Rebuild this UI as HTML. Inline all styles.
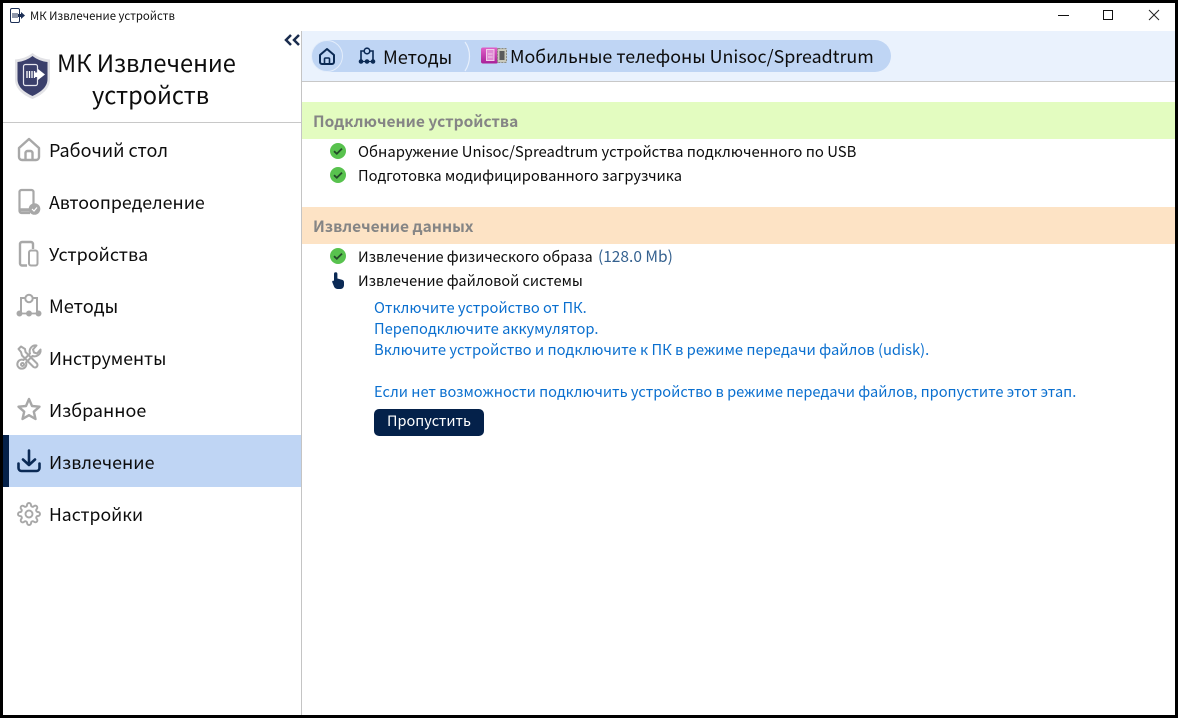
<!DOCTYPE html>
<html><head><meta charset="utf-8">
<style>
html,body{margin:0;padding:0;background:#000;}
#w{position:relative;width:1178px;height:718px;background:#000;overflow:hidden;font-family:"Noto Sans CJK JP","Liberation Sans",sans-serif;}
#a{position:absolute;left:3px;top:3px;width:1172px;height:712px;background:#fff;}
.t{position:absolute;white-space:nowrap;line-height:1;transform-origin:0 50%;}
.b{position:absolute;}
.n{font-size:18px;color:#0c0c0c;left:49px;}
.r{font-size:14.5px;color:#0c0c0c;left:358px;}
.l{font-size:14.7px;color:#0a6fcf;left:374px;}
.h{font-size:15.5px;font-weight:700;color:#858585;left:313px;}
svg{position:absolute;overflow:visible;}
</style></head><body><div id="w">
<div id="a"></div>

<!-- title bar -->
<svg style="left:10px;top:8px" width="16" height="16" viewBox="0 0 16 16" fill="none"><rect x="0.5" y="0.5" width="9" height="14" rx="1.5" stroke="#1c2f55"/><path d="M3 5v5M5 5v5M7 5v5" stroke="#1c2f55"/><path d="M8 6h3V4l4 3.5-4 3.5V9H8z" fill="#1c2f55"/></svg>
<div class="t" style="left:30px;top:11px;font-size:11.35px;color:#111">МК Извлечение устройств</div>
<svg style="left:1058px;top:15px" width="11" height="2"><rect width="11" height="1" fill="#111"/></svg>
<svg style="left:1103px;top:10px" width="10" height="10"><rect x="0.5" y="0.5" width="9" height="9" fill="none" stroke="#111"/></svg>
<svg style="left:1149px;top:10px" width="10" height="10"><path d="M0 0L10 10M10 0L0 10" stroke="#222" fill="none"/></svg>

<!-- sidebar -->
<div class="b" style="left:301px;top:31px;width:1px;height:684px;background:#c4c4c4"></div>
<div class="b" style="left:3px;top:122px;width:298px;height:1px;background:#c8c8c8"></div>
<svg style="left:284px;top:34px" width="17" height="12" fill="none" stroke="#1a2c4e" stroke-width="2.5"><path d="M7 1L2 6l5 5M15 1l-5 5 5 5"/></svg>
<svg style="left:14px;top:52px" width="37" height="48" viewBox="0 0 37 48"><path d="M18.5 1C23 5 30 7 36 7.500V27c0 10-8 16-17.500 20C9 43 1 37 1 27V7.500C7 7 14 5 18.500 1z" fill="#e2e2e6"/><path d="M18.5 4C23 7.500 28 9.500 33.500 10V27c0 8-6.500 13-15 17C10 40 3.500 35 3.500 27V10C9 9.500 14 7.500 18.500 4z" fill="#3a3f6b"/><rect x="9.500" y="12.500" width="14" height="21" rx="2" fill="none" stroke="#e8e8f0" stroke-width="1.200"/><path d="M13 19v7M15.500 19v7M18 19v7M20.500 19v7" stroke="#fff" stroke-width="1.300"/><path d="M21 20.500h3v-3.500l7 5.500-7 5.500V25h-3z" fill="#fff"/></svg>
<div class="t" style="left:57px;top:49px;font-size:23.6px;color:#0c0c0c;line-height:26px">МК Извлечение</div>
<div class="t" style="left:92px;top:81px;font-size:23.6px;color:#0c0c0c;line-height:26px">устройств</div>

<div class="b" style="left:3px;top:435px;width:298px;height:52px;background:#bfd5f4"></div>
<div class="b" style="left:3px;top:435px;width:6px;height:52px;background:#04214a"></div>

<svg style="left:17px;top:137px" width="24" height="24" viewBox="0 0 24 24" fill="none" stroke="#a8a8a8" stroke-width="2.4"><path d="M2 11L12 2l10 9v9a3 3 0 0 1-3 3H5a3 3 0 0 1-3-3z" stroke-linejoin="round"/><path d="M8.500 23v-7a2 2 0 0 1 2-2h3a2 2 0 0 1 2 2v7"/></svg>
<div class="t n" style="top:141px">Рабочий стол</div>
<svg style="left:18px;top:189px" width="22" height="26" viewBox="0 0 22 26" fill="none"><path d="M12 24H3.500a2 2 0 0 1-2-2V3a2 2 0 0 1 2-2h10a2 2 0 0 1 2 2v12" stroke="#a8a8a8" stroke-width="2.2"/><path d="M1.500 21h10" stroke="#a8a8a8" stroke-width="3.500"/><circle cx="16.500" cy="20" r="5.800" fill="#a8a8a8"/><path d="M14 20l2 2 3-3.500" stroke="#fff" stroke-width="1.200" fill="none"/></svg>
<div class="t n" style="top:194px;font-size:17.8px">Автоопределение</div>
<svg style="left:19px;top:241px" width="20" height="26" viewBox="0 0 20 26" fill="none" stroke="#a8a8a8" stroke-width="2.4"><path d="M8 24.500H3a2 2 0 0 1-2-2V3a2 2 0 0 1 2-2h9a2 2 0 0 1 2 2v5"/><rect x="10" y="9.500" width="8.500" height="15" rx="2" stroke-width="2"/></svg>
<div class="t n" style="top:246px;font-size:17.9px">Устройства</div>
<svg style="left:17px;top:293px" width="24" height="24" viewBox="0 0 24 24" fill="none" stroke="#a8a8a8" stroke-width="2"><circle cx="12" cy="5.500" r="3.700"/><path d="M8 5H4v15M16 5h4v15"/><path d="M2 20.500h20" stroke-width="1.800"/><circle cx="2.500" cy="20.500" r="2" fill="#a8a8a8"/><circle cx="12" cy="20.500" r="2" fill="#a8a8a8"/><circle cx="21.500" cy="20.500" r="2" fill="#a8a8a8"/></svg>
<div class="t n" style="top:297px;font-size:18.2px">Методы</div>
<svg style="left:17px;top:345px" width="25" height="25" viewBox="0 0 25 25" fill="none" stroke="#a8a8a8" stroke-width="2" stroke-linejoin="round"><path d="M1.500 4L4 1.500l4 2.500.5 3 11.500 11.500a2.500 2.500 0 0 1-3.500 3.500L5 10.500 4 7z"/><path d="M23.500 4.500a6 6 0 0 1-8 6.500L9 17.500a4.500 4.500 0 1 1-2.500-2.500l6.500-6.500a6 6 0 0 1 6.500-8L16 4.500l1 3 3 1z"/><circle cx="5.500" cy="19.500" r="1.500"/></svg>
<div class="t n" style="top:350px;font-size:17.6px">Инструменты</div>
<svg style="left:17px;top:397px" width="24" height="24" viewBox="0 0 24 24" fill="none" stroke="#a8a8a8" stroke-width="2.4"><path d="M12 2l3 7 7.500.7-5.700 5 1.700 7.300L12 18.200 5.500 22l1.700-7.300-5.700-5L9 9z" stroke-linejoin="round"/></svg>
<div class="t n" style="top:402px;font-size:17.9px">Избранное</div>
<svg style="left:17px;top:449px" width="24" height="24" viewBox="0 0 24 24" fill="none" stroke="#0b2a55" stroke-width="2.6" stroke-linecap="round" stroke-linejoin="round"><path d="M12 1.500v14M6 10.500l6 5.500 6-5.500"/><path d="M1.500 14.500v4.500a3 3 0 0 0 3 3h15a3 3 0 0 0 3-3v-4.500"/></svg>
<div class="t n" style="top:454px;font-size:17.9px">Извлечение</div>
<svg style="left:17px;top:502px" width="24" height="24" viewBox="0 0 24 24" fill="none" stroke="#a8a8a8" stroke-width="1.900" stroke-linejoin="round"><circle cx="12" cy="12" r="3.500"/><path d="M19.4 15a1.65 1.65 0 0 0 .33 1.82l.06.06a2 2 0 0 1 0 2.83 2 2 0 0 1-2.83 0l-.06-.06a1.65 1.65 0 0 0-1.82-.33 1.65 1.65 0 0 0-1 1.51V21a2 2 0 0 1-2 2 2 2 0 0 1-2-2v-.09A1.65 1.65 0 0 0 9 19.4a1.65 1.65 0 0 0-1.82.33l-.06.06a2 2 0 0 1-2.83 0 2 2 0 0 1 0-2.83l.06-.06a1.65 1.65 0 0 0 .33-1.82 1.65 1.65 0 0 0-1.51-1H3a2 2 0 0 1-2-2 2 2 0 0 1 2-2h.09A1.65 1.65 0 0 0 4.6 9a1.65 1.65 0 0 0-.33-1.82l-.06-.06a2 2 0 0 1 0-2.83 2 2 0 0 1 2.83 0l.06.06a1.65 1.65 0 0 0 1.82.33H9a1.65 1.65 0 0 0 1-1.51V3a2 2 0 0 1 2-2 2 2 0 0 1 2 2v.09a1.65 1.65 0 0 0 1 1.51 1.65 1.65 0 0 0 1.82-.33l.06-.06a2 2 0 0 1 2.83 0 2 2 0 0 1 0 2.83l-.06.06a1.65 1.65 0 0 0-.33 1.82V9a1.65 1.65 0 0 0 1.51 1H21a2 2 0 0 1 2 2 2 2 0 0 1-2 2h-.09a1.65 1.65 0 0 0-1.51 1z"/></svg>
<div class="t n" style="top:506px;font-size:17.6px">Настройки</div>

<!-- top breadcrumb -->
<div class="b" style="left:302px;top:31px;width:873px;height:50px;background:#eaf2fd"></div>
<div class="b" style="left:302px;top:81px;width:873px;height:1px;background:#c8c8c8"></div>
<div class="b" style="left:327px;top:40px;width:564px;height:32px;background:#bfd5f4;border-radius:0 16px 16px 0"></div>
<div class="b" style="left:311px;top:40px;width:30px;height:30px;background:#bfd5f4;border:1px solid #e3edfb;border-radius:50%"></div>
<svg style="left:319px;top:48px" width="16" height="17" viewBox="0 0 16 17" fill="none" stroke="#0b2a55" stroke-width="2"><path d="M1 7l7-6 7 6v7a2 2 0 0 1-2 2H3a2 2 0 0 1-2-2z" stroke-linejoin="round"/><path d="M5.500 16v-5a1 1 0 0 1 1-1h3a1 1 0 0 1 1 1v5" stroke-width="1.600"/></svg>
<svg style="left:359px;top:47px" width="16" height="17" viewBox="0 0 16 17" fill="none" stroke="#0b2a55" stroke-width="1.600"><circle cx="8" cy="4" r="2.800"/><path d="M5 4H2v10M11 4h3v10"/><path d="M1 14.500h14" stroke-width="1.200"/><circle cx="2" cy="14.500" r="1.500" fill="#0b2a55"/><circle cx="8" cy="14.500" r="1.500" fill="#0b2a55"/><circle cx="14" cy="14.500" r="1.500" fill="#0b2a55"/></svg>
<div class="t" style="left:383px;top:48px;font-size:18.2px;color:#0c0c0c">Методы</div>
<svg style="left:465px;top:42px" width="6" height="30" fill="none" stroke="#e8f0fc" stroke-width="1.200"><path d="M0 0C6 8 6 20 0 29"/></svg>
<svg style="left:481px;top:47px" width="26" height="17" viewBox="0 0 26 17"><defs><linearGradient id="g" x1="0" y1="0" x2="0" y2="1"><stop offset="0" stop-color="#e060c8"/><stop offset="1" stop-color="#a82098"/></linearGradient></defs><rect x="0" y="0.500" width="17" height="16" rx="2" fill="url(#g)"/><rect x="5.500" y="2.500" width="7.500" height="11" fill="#e08ad4" stroke="#f0cdea"/><path d="M7 7h4.500M7 10h4.500" stroke="#f0cdea"/><rect x="16.500" y="1.500" width="9" height="14" rx="1" fill="#c9c9bc" stroke="#8a8a80" stroke-dasharray="2 1"/><rect x="18.500" y="4" width="5" height="9" fill="#5a5a5a"/></svg>
<div class="t" style="left:510px;top:48px;font-size:17.85px;color:#0c0c0c">Мобильные телефоны Unisoc/Spreadtrum</div>

<!-- section 1 -->
<div class="b" style="left:302px;top:102px;width:873px;height:37px;background:#e3fcc0"></div>
<div class="t h" style="top:114px">Подключение устройства</div>
<svg style="left:330px;top:143px" width="16" height="16" viewBox="0 0 16 16"><circle cx="8" cy="8" r="8" fill="#58c24e"/><path d="M4 8.200l2.800 2.600L12 5.600" fill="none" stroke="#244a2a" stroke-width="1.800"/></svg>
<div class="t r" style="top:145px;font-size:14.83px">Обнаружение Unisoc/Spreadtrum устройства подключенного по USB</div>
<svg style="left:330px;top:167px" width="16" height="16" viewBox="0 0 16 16"><circle cx="8" cy="8" r="8" fill="#58c24e"/><path d="M4 8.200l2.800 2.600L12 5.600" fill="none" stroke="#244a2a" stroke-width="1.800"/></svg>
<div class="t r" style="top:169px;font-size:14.68px">Подготовка модифицированного загрузчика</div>

<!-- section 2 -->
<div class="b" style="left:302px;top:207px;width:873px;height:37px;background:#fde3c5"></div>
<div class="t h" style="top:219px">Извлечение данных</div>
<svg style="left:330px;top:248px" width="16" height="16" viewBox="0 0 16 16"><circle cx="8" cy="8" r="8" fill="#58c24e"/><path d="M4 8.200l2.800 2.600L12 5.600" fill="none" stroke="#244a2a" stroke-width="1.800"/></svg>
<div class="t r" style="top:249px">Извлечение физического образа <span style="color:#35618f;font-size:15.5px;margin-left:2px">(128.0 Mb)</span></div>
<svg style="left:332px;top:272px" width="12" height="17" viewBox="0 0 12 17"><path d="M2 2a1.700 1.700 0 0 1 3.400 0v4.500l4.600 1.200c1.300.3 2 1.200 2 2.500V13c0 2-1.200 4-3.500 4H5.500C3.800 17 2.700 16 2.100 14.800L.2 10c-.4-1 1.200-2 2-1l-.2.500z" fill="#0b2a55"/></svg>
<div class="t r" style="top:274px">Извлечение файловой системы</div>

<div class="t l" style="top:301px">Отключите устройство от ПК.</div>
<div class="t l" style="top:322px">Переподключите аккумулятор.</div>
<div class="t l" style="top:343px;font-size:14.76px">Включите устройство и подключите к ПК в режиме передачи файлов (udisk).</div>
<div class="t l" style="top:385px;font-size:14.61px">Если нет возможности подключить устройство в режиме передачи файлов, пропустите этот этап.</div>
<div class="b" style="left:374px;top:409px;width:110px;height:27px;background:#04214a;border-radius:5px"></div>
<div class="t" style="left:387px;top:414px;font-size:14.5px;color:#fff">Пропустить</div>
</div></body></html>
